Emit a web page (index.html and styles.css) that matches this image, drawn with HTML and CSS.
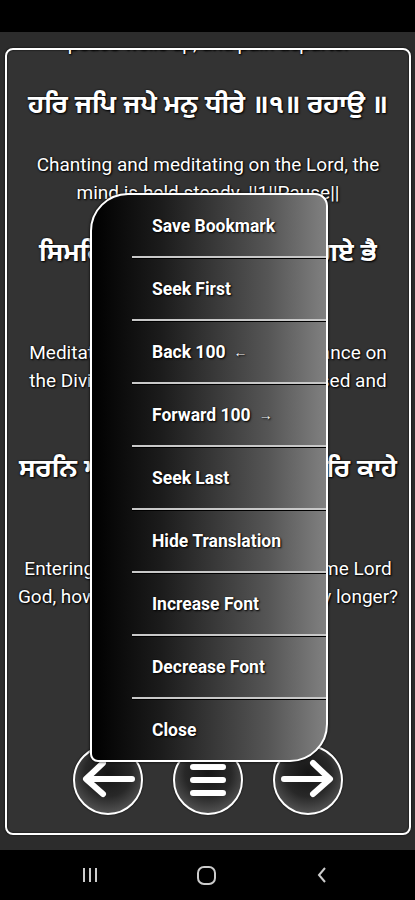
FILE: index.html
```html
<!DOCTYPE html>
<html lang="pa">
<head>
  <meta charset="UTF-8" />
  <meta name="viewport" content="width=device-width, initial-scale=1.0"/>
  <title>Gurbani Reader</title>
  <link rel="stylesheet" href="styles.css">
</head>
<body>
  <div class="status-bar"></div>

  <div class="screen">
    <div class="card">
      <div class="verses">
        <!-- previous line, scrolled mostly out of view -->
        <p class="english prev">peace wells up, and pain departs.</p>

        <p class="gurmukhi">ਹਰਿ ਜਪਿ ਜਪੇ ਮਨੁ ਧੀਰੇ ॥੧॥ ਰਹਾਉ ॥</p>
        <p class="english">Chanting and meditating on the Lord, the mind is held steady. ||1||Pause||</p>

        <p class="gurmukhi">ਸਿਮਰਿ ਸਿਮਰਿ ਗੁਰਦੇਉ ਮਿਟਿ ਗਏ ਭੈ<br>ਦੂਰੇ ॥</p>
        <p class="english">Meditating, meditating in remembrance on the Divine Guru, one's fears are erased and dispelled.</p>

        <p class="gurmukhi">ਸਰਨਿ ਆਵੈ ਪਾਰਬ੍ਰਹਮ ਕੀ ਤਉ ਫਿਰਿ ਕਾਹੇ ਝੂਰੇ ॥੧॥</p>
        <p class="english">Entering the Sanctuary of the Supreme Lord God, how can anyone feel sorrow any longer? ||1||</p>
      </div>

      <div class="controls">
        <button class="round-btn" aria-label="Previous">
          <svg viewBox="0 0 70 70" width="70" height="70">
            <path d="M59 34 H14 M30 18 L13 34 L30 49" class="icon-line"/>
          </svg>
        </button>
        <button class="round-btn" aria-label="Menu">
          <svg viewBox="0 0 70 70" width="70" height="70">
            <path d="M20 22 H50 M20 35 H50 M20 48 H50" class="icon-line"/>
          </svg>
        </button>
        <button class="round-btn" aria-label="Next">
          <svg viewBox="0 0 70 70" width="70" height="70">
            <path d="M11 34 H56 M40 18 L57 34 L40 49" class="icon-line"/>
          </svg>
        </button>
      </div>

      <!-- popup menu -->
      <div class="menu">
        <div class="menu-item">Save Bookmark</div>
        <div class="menu-item">Seek First</div>
        <div class="menu-item">Back 100 <span class="arrow">&larr;</span></div>
        <div class="menu-item">Forward 100 <span class="arrow">&rarr;</span></div>
        <div class="menu-item">Seek Last</div>
        <div class="menu-item">Hide Translation</div>
        <div class="menu-item">Increase Font</div>
        <div class="menu-item">Decrease Font</div>
        <div class="menu-item">Close</div>
      </div>
    </div>
  </div>

  <div class="nav-bar">
    <div class="nav-recent"><span></span><span></span><span></span></div>
    <div class="nav-home"></div>
    <svg class="nav-back" viewBox="0 0 12 20" width="12" height="20">
      <path d="M9 3 L3 10 L9 17" />
    </svg>
  </div>
</body>
</html>
```

FILE: styles.css
```css
body {
  margin: 0;
  width: 415px;
  height: 900px;
  background: #2c2c2c;
  font-family: Roboto, "Noto Sans", sans-serif;
  color: #fff;
  display: flex;
  flex-direction: column;
  overflow: hidden;
}

.status-bar {
  height: 32px;
  background: #000;
}

.screen {
  height: 818px;
  padding: 16px 4px 15px 5px;
  box-sizing: border-box;
}

.card {
  position: relative;
  height: 100%;
  box-sizing: border-box;
  border: 2px solid #fff;
  border-radius: 8px;
  background: #333;
  box-shadow: 0 0 2px #000, inset 0 0 2px #000;
  display: flex;
  flex-direction: column;
}

.verses {
  flex: 1;
  overflow: hidden;
  padding: 0 10px;
}

p {
  margin: 0;
  text-align: center;
  text-shadow: 1px 1px 2px #000, 0 0 2px #000;
}

.gurmukhi {
  font-family: "Noto Sans Gurmukhi", "Noto Sans", sans-serif;
  font-weight: bold;
  font-size: 26px;
  line-height: 40px;
  margin-top: 28px;
}

.english {
  font-size: 19px;
  line-height: 28px;
  margin-top: 24px;
}

.english.prev {
  margin-top: -20px;
}

.prev + .gurmukhi {
  margin-top: 29px;
}

.controls {
  height: 70px;
  margin-bottom: 18px;
  display: flex;
  justify-content: center;
  gap: 30px;
}

.round-btn {
  width: 70px;
  height: 70px;
  padding: 0;
  border: 2px solid #fff;
  border-radius: 50%;
  background: radial-gradient(circle at 50% 40%, #151515 0%, #282828 45%, #707070 100%);
  box-shadow: 0 0 2px #000;
}

.round-btn svg {
  display: block;
  margin: -2px;
}

.icon-line {
  fill: none;
  stroke: #fff;
  stroke-width: 6;
  stroke-linecap: round;
  stroke-linejoin: round;
}

/* popup menu */
.menu {
  position: absolute;
  left: 83px;
  top: 143px;
  width: 238px;
  box-sizing: border-box;
  border: 2px solid #fff;
  border-radius: 38px 13px 38px 8px;
  background: linear-gradient(to right, #000 0%, #1c1c1c 30%, #555 75%, #808080 100%);
  box-shadow: 0 0 3px #000;
  overflow: hidden;
}

.menu-item {
  height: 61px;
  display: flex;
  align-items: center;
  padding-left: 60px;
  font-weight: bold;
  font-size: 17.5px;
  text-shadow: 1px 1px 2px #000, 0 0 1px #000;
}

.menu-item + .menu-item {
  margin-left: 40px;
  padding-left: 20px;
  border-top: 2px solid #c8c8c8;
  box-shadow: inset 0 1px 0 #000;
}

.menu-item .arrow {
  font-weight: normal;
  font-size: 14px;
  margin-left: 8px;
}

/* android nav bar */
.nav-bar {
  height: 50px;
  background: #000;
  display: flex;
  align-items: center;
  justify-content: space-between;
  padding: 0 87px 0 83px;
}

.nav-recent {
  display: flex;
  gap: 4px;
}

.nav-recent span {
  width: 2px;
  height: 14px;
  background: #ccc;
}

.nav-home {
  width: 15px;
  height: 15px;
  border: 2px solid #ccc;
  border-radius: 7px;
}

.nav-back path {
  fill: none;
  stroke: #ccc;
  stroke-width: 2;
}
```
